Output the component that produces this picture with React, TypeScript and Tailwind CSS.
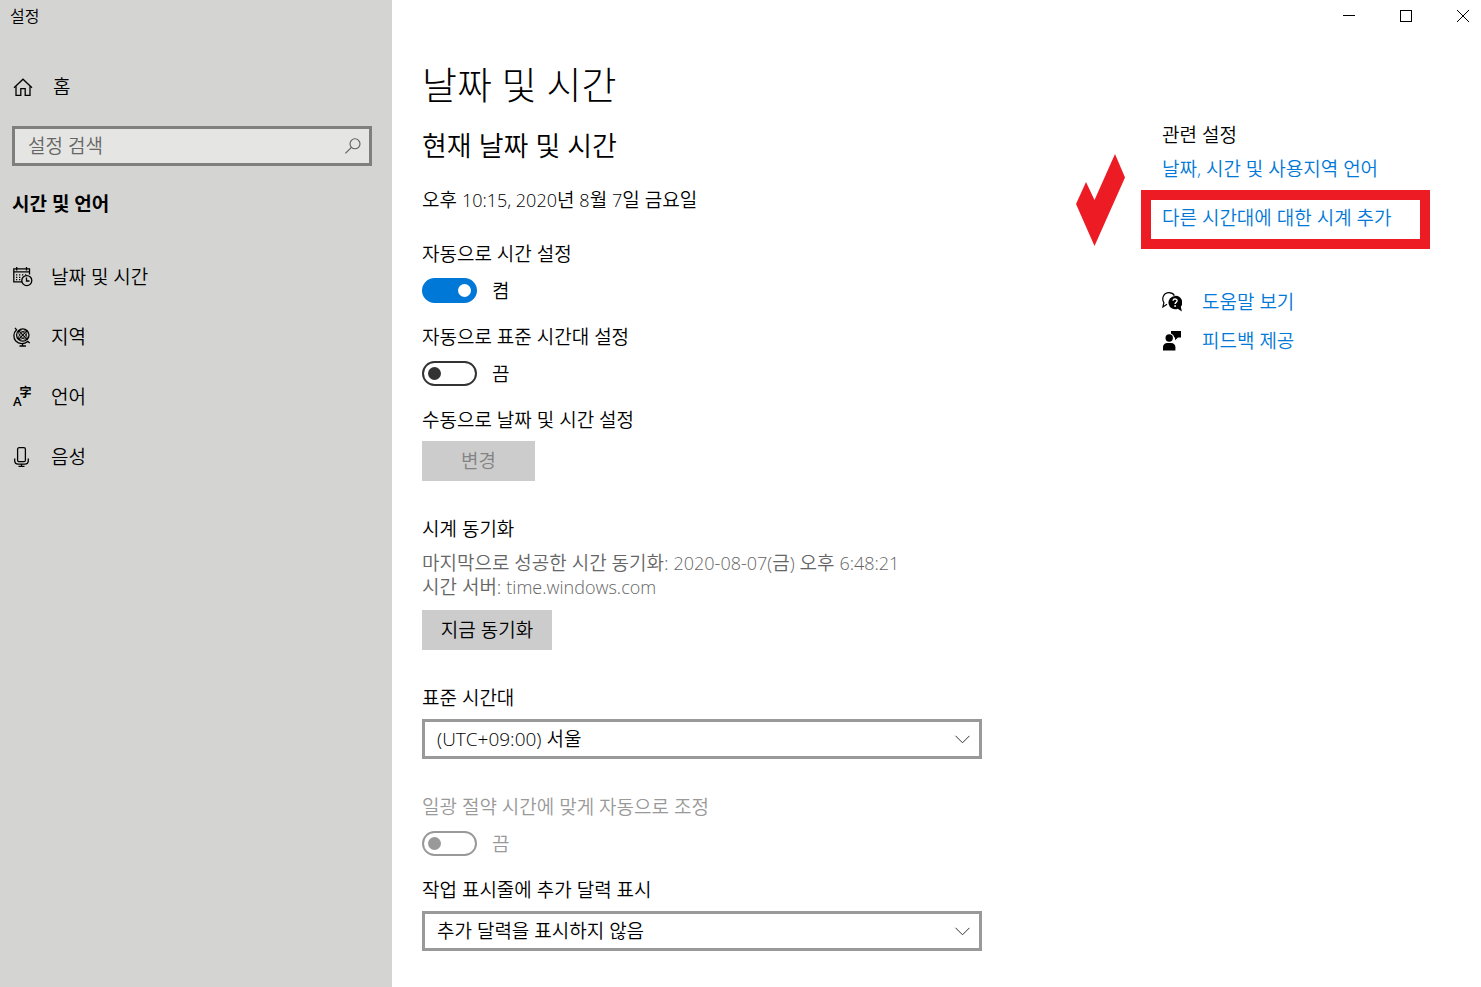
import { useState } from "react";
import type { ReactNode } from "react";

function HomeIcon() {
  return (
    <svg className="h-5 w-5" viewBox="0 0 20 20" fill="none" stroke="currentColor" strokeWidth="1.3">
      <path d="M1 10.800 10 2.200l9 8.600" />
      <path d="M3 9.200v9.100h4.800v-6.600h4.400v6.600H17V9.200" />
    </svg>
  );
}

function SearchIcon() {
  return (
    <svg className="h-4 w-4" viewBox="0 0 16 16" fill="none" stroke="currentColor" strokeWidth="1.1">
      <circle cx="10" cy="5.8" r="5" />
      <path d="M6.4 9.3.4 15.3" />
    </svg>
  );
}

function CalendarClockIcon() {
  return (
    <svg className="h-5 w-5" viewBox="0 0 20 20" fill="none" stroke="currentColor" strokeWidth="1.3">
      <path d="M9 14.800H.8V1.800h15.700V7.500M.8 4.800h15.700M3.700 0v3.500M13.500 0v3.500" />
      <path d="M3 7.800h1.300M6 7.800h1.300M9 7.800h1.300M12 7.800h1.300M3 10.300h1.300M6 10.300h1.300M3 12.700h1.300M6 12.700h1.300" />
      <circle cx="13.800" cy="13.600" r="5" />
      <path d="M13.500 10.500V14h3" />
    </svg>
  );
}

function GlobeIcon() {
  return (
    <svg className="h-5 w-5" viewBox="0 0 20 20" fill="none" stroke="currentColor" strokeWidth="1.3">
      <circle cx="9.800" cy="8" r="6.200" />
      <path d="M5.500 3.700l8.600 8.600M14.100 3.700l-8.600 8.600" strokeWidth="1.100" />
      <path
        d="M5.500 3.700c4-.8 9.400 4.600 8.600 8.600M5.500 3.700c-.8 4 4.600 9.400 8.600 8.600M14.100 3.700c-4-.8-9.400 4.600-8.600 8.600M14.100 3.700c.8 4-4.600 9.400-8.600 8.600"
        strokeWidth="0.900"
      />
      <path d="M2 .8l1.600 2C0 6 .2 11.200 2.800 14c3 3.200 8.400 3.400 11.800.4l2.200 1.600" />
      <path d="M9.600 16.400v2.400M6.500 19h6.400" />
    </svg>
  );
}

function LanguageIcon() {
  return (
    <span className="flex h-5 w-5 leading-3 font-semibold" aria-hidden="true">
      <span className="self-end text-[13px]">A</span>
      <span className="-ml-0.5 self-start text-xs leading-3">字</span>
    </span>
  );
}

function MicIcon() {
  return (
    <svg className="h-5 w-5" viewBox="0 0 20 20" fill="none" stroke="currentColor" strokeWidth="1.3">
      <rect x="4.600" y="0.700" width="7.800" height="14" rx="1.500" />
      <path d="M1.700 11.500v2c0 2.200 1.300 3.600 3.500 3.600h6.600c2.200 0 3.500-1.400 3.500-3.600v-2M8.500 17v2.400M5.500 19.300h6" />
    </svg>
  );
}

function HelpIcon() {
  return (
    <svg className="h-5 w-5" viewBox="0 0 20 20" fill="none">
      <path
        d="M5 12.300.9 15l1-4.400C-.8 6.400 1.800.7 6.900.7c2.600 0 4.500 1 5.500 2.900"
        stroke="currentColor"
        strokeWidth="1.200"
      />
      <path d="M13 3.900a6.700 6.700 0 1 0 2.700 12.900l4.200 2.700-1.100-4.700A6.700 6.700 0 0 0 13 3.900z" fill="currentColor" />
      <path d="M11 8.700c.2-2.300 4.200-2.200 4.100.1 0 1.500-2 1.600-2 3.200" stroke="#fff" strokeWidth="1.400" />
      <circle cx="13.100" cy="14" r="0.900" fill="#fff" />
    </svg>
  );
}

function FeedbackIcon() {
  return (
    <svg className="h-5 w-5" viewBox="0 0 20 20" fill="currentColor">
      <path d="M9 0h10v6.400h-3L13 9.200V6.400h-.6A5.500 5.500 0 0 0 9 2.600z" />
      <circle cx="7.200" cy="7" r="3.700" />
      <path d="M1 19.500v-3.200C1 13.600 2.700 12 5.400 12H9c2.700 0 4.400 1.600 4.400 4.300v3.200z" />
    </svg>
  );
}

const navItems = [
  { label: "날짜 및 시간", icon: <CalendarClockIcon /> },
  { label: "지역", icon: <GlobeIcon /> },
  { label: "언어", icon: <LanguageIcon /> },
  { label: "음성", icon: <MicIcon /> },
];

// Latin runs are set a little smaller so that they sit well next to Hangul
function Latin({ children }: { children: ReactNode }) {
  return <span className="text-[18px]">{children}</span>;
}

type ToggleProps = {
  id: string;
  label: string;
  defaultOn?: boolean;
  disabled?: boolean;
};

function Toggle({ id, label, defaultOn = false, disabled = false }: ToggleProps) {
  const [on, setOn] = useState(defaultOn);

  return (
    <div className={disabled ? "text-[#999999]" : ""}>
      <label htmlFor={id} className="block">
        {label}
      </label>
      <div className="mt-3 flex h-[25px] items-center gap-[15px]">
        <input
          id={id}
          type="checkbox"
          role="switch"
          checked={on}
          disabled={disabled}
          onChange={(e) => setOn(e.target.checked)}
          className="flex h-[25px] w-[55px] appearance-none items-center rounded-full border-2 border-[#333333] px-1 before:h-[13px] before:w-[13px] before:rounded-full before:bg-[#333333] checked:justify-end checked:border-[#0078d7] checked:bg-[#0078d7] checked:before:bg-white disabled:border-[#999999] disabled:before:bg-[#999999]"
        />
        <span>{on ? "켬" : "끔"}</span>
      </div>
    </div>
  );
}

type SelectFieldProps = {
  id: string;
  label: string;
  options: string[];
};

function SelectField({ id, label, options }: SelectFieldProps) {
  return (
    <div>
      <label htmlFor={id} className="block">
        {label}
      </label>
      <div className="relative mt-[9px]">
        <select
          id={id}
          className="block h-10 w-full appearance-none border-3 border-[#999999] bg-white pr-10 pl-3 focus:outline-none"
        >
          {options.map((option) => (
            <option key={option}>{option}</option>
          ))}
        </select>
        <svg
          className="pointer-events-none absolute top-4 right-3 h-[9px] w-4"
          viewBox="0 0 16 9"
          fill="none"
          stroke="#333333"
        >
          <path d="M1.500 .8l7 7 7-7" />
        </svg>
      </div>
    </div>
  );
}

export default function App() {
  const [query, setQuery] = useState("");

  return (
    <div className="flex min-h-screen bg-white font-['Open_Sans','Noto_Sans_CJK_KR',sans-serif] text-[19px] leading-6 font-[350] text-black">
      <aside className="w-[392px] shrink-0 bg-[#d4d4d2]">
        <div className="flex h-8 items-center px-[10px] text-[16px]">설정</div>

        <div className="pr-5 pl-3">
          <a href="#home" className="mt-[25px] flex h-[60px] items-center gap-5 pl-px">
            <HomeIcon />
            홈
          </a>

          <div className="relative mt-[9px]">
            <input
              type="text"
              aria-label="설정 검색"
              placeholder="설정 검색"
              value={query}
              onChange={(e) => setQuery(e.target.value)}
              className="block h-10 w-full border-3 border-[#7f7f7d] bg-[#e5e5e3] pr-10 pl-[13px] placeholder:text-[#666666] focus:outline-none"
            />
            <span className="pointer-events-none absolute top-3 right-[11px] text-[#5f5f5f]">
              <SearchIcon />
            </span>
          </div>

          <h2 className="mt-[26px] font-bold">시간 및 언어</h2>

          <nav className="mt-[31px]">
            {navItems.map((item) => (
              <a key={item.label} href="#" className="flex h-[60px] items-center gap-[18px] pl-px">
                {item.icon}
                {item.label}
              </a>
            ))}
          </nav>
        </div>
      </aside>

      <div className="min-w-0 flex-1">
        <div className="flex h-8 items-center justify-end gap-[45px] pr-3">
          <button type="button" aria-label="최소화">
            <svg className="h-3 w-3" viewBox="0 0 12 12" stroke="currentColor">
              <path d="M0 5.500h12" />
            </svg>
          </button>
          <button type="button" aria-label="최대화">
            <svg className="h-3 w-3" viewBox="0 0 12 12" fill="none" stroke="currentColor">
              <rect x="0.500" y="0.500" width="11" height="11" />
            </svg>
          </button>
          <button type="button" aria-label="닫기">
            <svg className="h-3 w-3" viewBox="0 0 12 12" stroke="currentColor">
              <path d="M0 0l12 12M12 0 0 12" />
            </svg>
          </button>
        </div>

        <div className="flex gap-[180px] pl-[30px]">
          <main className="w-[560px] pt-7 pb-9">
            <h1 className="text-[38px] leading-[48px] font-light">날짜 및 시간</h1>
            <h2 className="mt-[18px] text-[27px] leading-10">현재 날짜 및 시간</h2>
            <p className="mt-[22px]">
              오후 <Latin>10:15, 2020</Latin>년 <Latin>8</Latin>월 <Latin>7</Latin>일 금요일
            </p>

            <div className="mt-[30px] space-y-[22px]">
              <Toggle id="auto-time" label="자동으로 시간 설정" defaultOn />
              <Toggle id="auto-zone" label="자동으로 표준 시간대 설정" />
              <div>
                <p>수동으로 날짜 및 시간 설정</p>
                <button type="button" disabled className="mt-[9px] block h-10 w-[113px] bg-[#cccccc] text-[#838383]">
                  변경
                </button>
              </div>
            </div>

            <h3 className="mt-9">시계 동기화</h3>
            <p className="mt-[10px] text-[#666666]">
              마지막으로 성공한 시간 동기화: <Latin>2020-08-07(</Latin>금<Latin>)</Latin> 오후 <Latin>6:48:21</Latin>
              <br />
              시간 서버: <Latin>time.windows.com</Latin>
            </p>
            <button type="button" className="mt-[11px] block h-10 w-[130px] bg-[#cccccc]">
              지금 동기화
            </button>

            <div className="mt-9">
              <SelectField
                id="time-zone"
                label="표준 시간대"
                options={["(UTC+09:00) 서울", "(UTC+09:00) 평양", "(UTC+00:00) 런던"]}
              />
            </div>
            <div className="mt-9 space-y-[22px]">
              <Toggle id="dst" label="일광 절약 시간에 맞게 자동으로 조정" disabled />
              <SelectField
                id="extra-calendar"
                label="작업 표시줄에 추가 달력 표시"
                options={["추가 달력을 표시하지 않음", "중국어 간체", "중국어 번체"]}
              />
            </div>
          </main>

          <aside className="relative flex-1 pt-[91px]">
            <h3>관련 설정</h3>
            <a href="#region" className="mt-[10px] block text-[#0078d7]">
              날짜, 시간 및 사용지역 언어
            </a>
            <a href="#clocks" className="relative mt-[25px] block text-[#0078d7]">
              다른 시간대에 대한 시계 추가
              <span className="absolute -top-4 -left-[21px] h-[59px] w-[289px] border-10 border-[#ed1c24]" />
            </a>
            <svg className="absolute top-[122px] -left-[86px] h-[92px] w-[49px]" viewBox="0 0 49 92" fill="#ed1c24">
              <path d="M0 50 10 28l8.500 18L39 0l10 23.500L18.500 92z" />
            </svg>

            <a href="#help" className="mt-[60px] flex items-center gap-5 text-[#0078d7]">
              <span className="text-black">
                <HelpIcon />
              </span>
              도움말 보기
            </a>
            <a href="#feedback" className="mt-[15px] flex items-center gap-5 text-[#0078d7]">
              <span className="text-black">
                <FeedbackIcon />
              </span>
              피드백 제공
            </a>
          </aside>
        </div>
      </div>
    </div>
  );
}
